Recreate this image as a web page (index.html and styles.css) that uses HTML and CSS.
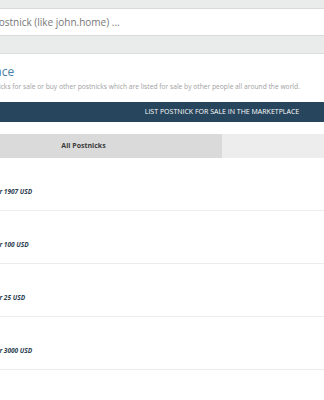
FILE: index.html
```html
<!DOCTYPE html>
<html lang="en-US">

<head>
    <meta charset="UTF-8">
    <meta name="viewport" content="width=device-width, initial-scale=1">
    <title>Postnick Marketplace</title>
    <link rel="stylesheet" href="styles.css">
</head>

<body>
    <main class="page">
        <div class="search-bar">
            <div class="search-input">Enter postnick (like john.home) ...</div>
        </div>

        <section class="intro">
            <h1 class="title">Marketplace</h1>
            <p class="lead">Put your postnicks for sale or buy other postnicks which are listed for sale by other people all around the world.</p>
            <div class="list-button">List postnick for sale in the marketplace</div>
        </section>

        <div class="tabs">
            <div class="tab active">All Postnicks</div>
            <div class="tab">My Postnicks</div>
        </div>

        <ul class="listing">
            <li class="row"><span class="price">Listed for 1907 USD</span></li>
            <li class="row"><span class="price">Listed for 100 USD</span></li>
            <li class="row"><span class="price">Listed for 25 USD</span></li>
            <li class="row"><span class="price">Listed for 3000 USD</span></li>
            <li class="row"><span class="price">Listed for 500 USD</span></li>
        </ul>
    </main>
</body>

</html>
```

FILE: styles.css
```css
/* Page */
body {
    margin: 0;
    background: #fff;
    font-family: "Open Sans", "Liberation Sans", sans-serif;
    overflow: hidden;
}

.page {
    width: 584px;
    margin-left: -70px;
}

/* Search */
.search-bar {
    background: #eaebeb;
    padding: 8px 0 17px;
    border-bottom: 1px solid #dcdedd;
}

.search-input {
    height: 26px;
    line-height: 26px;
    background: #fff;
    border-top: 1px solid #d9dbda;
    border-bottom: 1px solid #d9dbda;
    padding-left: 35px;
    font-size: 10px;
    color: #777;
}

/* Intro */
.intro {
    padding: 10px 15px 0;
}

.title {
    margin: 0;
    font-size: 12px;
    line-height: 16px;
    font-weight: normal;
    color: #4a7fa5;
}

.lead {
    margin: 1px 0 0;
    padding-left: 8px;
    font-size: 6.7px;
    line-height: 12px;
    color: #a0a0a0;
}

.list-button {
    margin-top: 9px;
    height: 20px;
    line-height: 20px;
    background: #27455c;
    color: #fff;
    text-align: center;
    text-transform: uppercase;
    font-size: 7px;
}

/* Tabs */
.tabs {
    display: flex;
    margin: 12px 15px 0;
}

.tab {
    flex: 1;
    height: 24px;
    line-height: 24px;
    text-align: center;
    background: #ededed;
    color: #ededed;
    font-size: 7px;
    font-weight: bold;
}

.tab.active {
    background: #dadada;
    color: #3a3a3a;
}

/* Listing */
.listing {
    list-style: none;
    margin: 0;
    padding: 0;
}

.row {
    height: 52px;
    padding-left: 43px;
    border-bottom: 1px solid #ececec;
    display: flex;
    align-items: flex-end;
}

.price {
    margin-bottom: 13px;
    font-size: 6.5px;
    line-height: 10px;
    font-weight: bold;
    font-style: italic;
    color: #2c3e50;
}
```
